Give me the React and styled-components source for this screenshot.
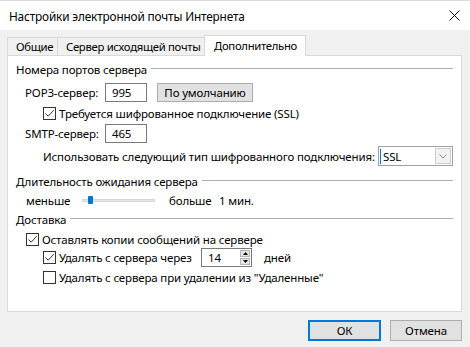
import React from "react";
import styled, { createGlobalStyle } from "styled-components";

const GlobalStyle = createGlobalStyle`
  html, body { margin: 0; padding: 0; }
  body {
    font-family: "Noto Sans", "Open Sans", sans-serif;
    font-size: 11.5px;
    letter-spacing: -0.15px;
    color: #000;
    background: #f0f0f0;
  }
`;

const Window = styled.div`
  width: 470px;
  height: 347px;
  display: flex;
  flex-direction: column;
  background: #f0f0f0;
  overflow: hidden;
`;

const TitleBar = styled.div`
  height: 30px;
  box-sizing: border-box;
  border-top: 1px solid #dcdcdc;
  background: #fff;
  display: flex;
  align-items: center;
  justify-content: space-between;
  padding: 0 10px 0 9px;
`;

const Title = styled.span`
  font-size: 11.8px;
`;

const CloseIcon = styled.svg`
  width: 11px;
  height: 11px;
`;

const Body = styled.div`
  flex: 1;
  display: flex;
  flex-direction: column;
  padding: 5px 8px 0 7px;
`;

const TabStrip = styled.div`
  display: flex;
  align-items: flex-end;
  height: 20px;
  position: relative;
  z-index: 1;
`;

const Tab = styled.div`
  box-sizing: border-box;
  width: ${(p) => p.$w}px;
  height: ${(p) => (p.$active ? "21px" : "18px")};
  margin-bottom: ${(p) => (p.$active ? "-1px" : "0")};
  padding: ${(p) => (p.$active ? "0 0 1px 9px" : "0 0 0 8px")};
  background: ${(p) => (p.$active ? "#fff" : "#f0f0f0")};
  border: 1px solid #d9d9d9;
  border-bottom: none;
  margin-left: ${(p) => (p.$first ? "0" : "-1px")};
  display: flex;
  align-items: center;
  white-space: nowrap;
  font-size: 11.3px;
  letter-spacing: -0.3px;
`;

const Panel = styled.div`
  box-sizing: border-box;
  height: 257px;
  background: #fff;
  border: 1px solid #d9d9d9;
  padding: 5px 8px 0 8px;
  display: flex;
  flex-direction: column;
`;

const GroupHeader = styled.div`
  display: flex;
  align-items: center;
  height: 16px;
  margin-top: ${(p) => p.$mt || 0}px;
  white-space: nowrap;
`;

const GroupLine = styled.div`
  flex: 1;
  height: 1px;
  background: #b0b0b0;
  margin-left: 4px;
  margin-top: -1px;
`;

const Row = styled.div`
  display: flex;
  align-items: center;
  height: ${(p) => p.$h || 16}px;
  margin-top: ${(p) => p.$mt || 0}px;
  padding-left: ${(p) => p.$indent || 0}px;
  white-space: nowrap;
`;

const FieldLabel = styled.span`
  width: ${(p) => p.$w}px;
  flex: none;
`;

const TextBox = styled.div`
  box-sizing: border-box;
  width: ${(p) => p.$w || 42}px;
  height: 19px;
  border: 1px solid #7a7a7a;
  background: #fff;
  display: flex;
  align-items: center;
  padding-left: 6px;
`;

const PushButton = styled.div`
  box-sizing: border-box;
  width: ${(p) => p.$w}px;
  height: ${(p) => p.$h || 19}px;
  margin-left: ${(p) => p.$ml || 0}px;
  background: #e1e1e1;
  border: ${(p) => (p.$default ? "2px solid #0078d7" : "1px solid #adadad")};
  display: flex;
  align-items: center;
  justify-content: center;
`;

const CheckWrap = styled.label`
  display: flex;
  align-items: center;
  flex: none;
`;

const Box = styled.span`
  box-sizing: border-box;
  width: 13px;
  height: 13px;
  border: 1px solid #333;
  background: #fff;
  margin-right: 3px;
  display: flex;
  align-items: center;
  justify-content: center;
  flex: none;
`;

const CheckMark = () => (
  <svg width="11" height="11" viewBox="0 0 11 11">
    <path d="M1.5 5.5 L4.2 8.2 L9.8 2.2" fill="none" stroke="#333" strokeWidth="1" />
  </svg>
);

const Check = ({ checked, children, width }) => (
  <CheckWrap style={width ? { width } : undefined}>
    <Box>{checked && <CheckMark />}</Box>
    <span>{children}</span>
  </CheckWrap>
);

const Select = styled.div`
  margin-left: auto;
  box-sizing: border-box;
  width: 75px;
  height: 20px;
  border: 1px solid #a0a0a0;
  background: #fff;
  display: flex;
  align-items: center;
  padding: 1px;
  flex: none;
`;

const SelectText = styled.span`
  flex: 1;
  border-left: 1px solid #0078d7;
  padding-left: 2px;
  line-height: 15px;
`;

const SelectArrow = styled.div`
  box-sizing: border-box;
  width: 16px;
  height: 16px;
  border: 1px solid #cfcfcf;
  background: #f2f2f2;
  display: flex;
  align-items: center;
  justify-content: center;
`;

const SliderLabel = styled.span`
  width: ${(p) => p.$w}px;
  flex: none;
`;

const Track = styled.div`
  position: relative;
  width: 73px;
  height: 3px;
  background: #e7e7e7;
  border: 1px solid #d6d6d6;
  box-sizing: border-box;
  flex: none;
  margin-right: 14px;
`;

const Thumb = styled.div`
  position: absolute;
  left: 5px;
  top: -4px;
  width: 5px;
  height: 8px;
  background: #0078d7;
  border-radius: 1px;
`;

const Spin = styled.div`
  box-sizing: border-box;
  width: 51px;
  height: 19px;
  border: 1px solid #7a7a7a;
  background: #fff;
  display: flex;
  align-items: center;
`;

const SpinText = styled.span`
  flex: 1;
  padding-left: 6px;
`;

const SpinButtons = styled.div`
  display: flex;
  flex-direction: column;
  gap: 1px;
  margin-right: 1px;
`;

const SpinButton = styled.div`
  box-sizing: border-box;
  width: 10px;
  height: 7px;
  background: #e5e5e5;
  border: 1px solid #b5b5b5;
  display: flex;
  align-items: center;
  justify-content: center;
`;

const Units = styled.span`
  margin-left: 12px;
`;

const Footer = styled.div`
  display: flex;
  justify-content: flex-end;
  gap: 9px;
  margin-top: 8px;
`;

const Tri = ({ up }) => (
  <svg width="5" height="3" viewBox="0 0 5 3">
    <path d={up ? "M0 3 L2.5 0 L5 3 Z" : "M0 0 L5 0 L2.5 3 Z"} fill="#000" />
  </svg>
);

export default function App() {
  return (
    <>
      <GlobalStyle />
      <Window>
        <TitleBar>
          <Title>Настройки электронной почты Интернета</Title>
          <CloseIcon viewBox="0 0 11 11">
            <path d="M0.5 0.5 L10.5 10.5 M10.5 0.5 L0.5 10.5" stroke="#000" strokeWidth="1" />
          </CloseIcon>
        </TitleBar>
        <Body>
          <TabStrip>
            <Tab $first $w={51}>Общие</Tab>
            <Tab $w={148}>Сервер исходящей почты</Tab>
            <Tab $active $w={102}>Дополнительно</Tab>
          </TabStrip>
          <Panel>
            <GroupHeader>
              Номера портов сервера
              <GroupLine />
            </GroupHeader>
            <Row $h={19} $mt={6} $indent={9}>
              <FieldLabel $w={80}>POP3-сервер:</FieldLabel>
              <TextBox>995</TextBox>
              <PushButton $w={96} $ml={10}>По умолчанию</PushButton>
            </Row>
            <Row $mt={3} $indent={27}>
              <Check checked>Требуется шифрованное подключение (SSL)</Check>
            </Row>
            <Row $h={19} $mt={3} $indent={9}>
              <FieldLabel $w={80}>SMTP-сервер:</FieldLabel>
              <TextBox>465</TextBox>
            </Row>
            <Row $h={20} $mt={3} $indent={27}>
              <span>Использовать следующий тип шифрованного подключения:</span>
              <Select>
                <SelectText>SSL</SelectText>
                <SelectArrow>
                  <svg width="8" height="5" viewBox="0 0 8 5">
                    <path d="M0.5 0.5 L4 4 L7.5 0.5" fill="none" stroke="#8a8a8a" strokeWidth="1" />
                  </svg>
                </SelectArrow>
              </Select>
            </Row>
            <GroupHeader $mt={7}>
              Длительность ожидания сервера
              <GroupLine />
            </GroupHeader>
            <Row $mt={3} $indent={10}>
              <SliderLabel $w={56}>меньше</SliderLabel>
              <Track>
                <Thumb />
              </Track>
              <SliderLabel $w={50}>больше</SliderLabel>
              <span>1 мин.</span>
            </Row>
            <GroupHeader $mt={3}>
              Доставка
              <GroupLine />
            </GroupHeader>
            <Row $mt={4} $indent={10}>
              <Check checked>Оставлять копии сообщений на сервере</Check>
            </Row>
            <Row $h={19} $mt={1} $indent={27}>
              <Check checked width={158}>Удалять с сервера через</Check>
              <Spin>
                <SpinText>14</SpinText>
                <SpinButtons>
                  <SpinButton><Tri up /></SpinButton>
                  <SpinButton><Tri /></SpinButton>
                </SpinButtons>
              </Spin>
              <Units>дней</Units>
            </Row>
            <Row $mt={2} $indent={27}>
              <Check>Удалять с сервера при удалении из "Удаленные"</Check>
            </Row>
          </Panel>
          <Footer>
            <PushButton $w={73} $h={21} $default>ОК</PushButton>
            <PushButton $w={72} $h={21}>Отмена</PushButton>
          </Footer>
        </Body>
      </Window>
    </>
  );
}
